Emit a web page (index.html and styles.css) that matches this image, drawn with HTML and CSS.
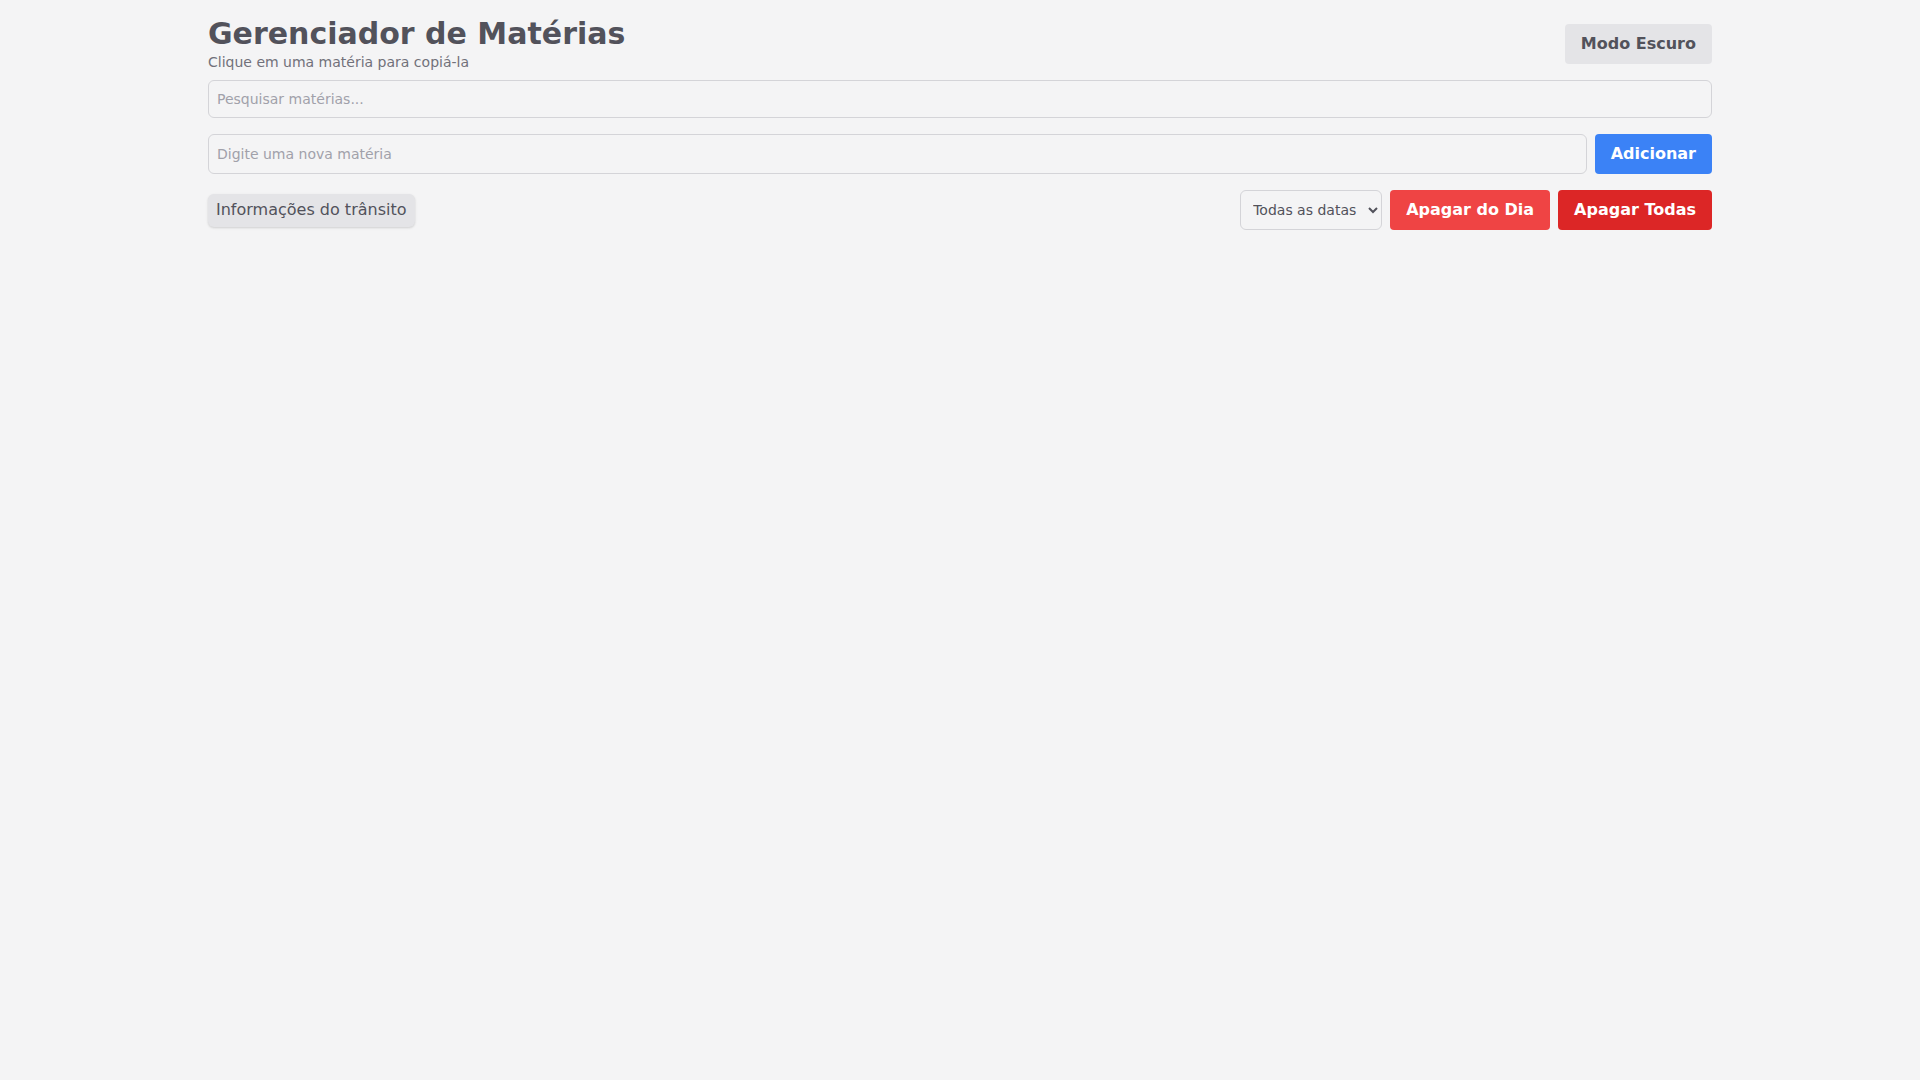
FILE: index.html
```html
<!DOCTYPE html>
<html lang="pt-BR">
<head>
<meta charset="utf-8">
<title>Gerenciador de Matérias</title>
<link rel="stylesheet" href="styles.css">
</head>
<body>
<div class="container">
  <header class="header">
    <div class="heading">
      <h1 class="title">Gerenciador de Matérias</h1>
      <p class="subtitle">Clique em uma matéria para copiá-la</p>
    </div>
    <button class="btn btn-gray">Modo Escuro</button>
  </header>

  <input class="field search" type="text" placeholder="Pesquisar matérias...">

  <div class="add-row">
    <input class="field add-input" type="text" placeholder="Digite uma nova matéria">
    <button class="btn btn-blue">Adicionar</button>
  </div>

  <div class="tools-row">
    <button class="traffic">Informações do trânsito</button>
    <div class="actions">
      <select class="date-select">
        <option>Todas as datas</option>
      </select>
      <button class="btn btn-red">Apagar do Dia</button>
      <button class="btn btn-darkred">Apagar Todas</button>
    </div>
  </div>
</div>
</body>
</html>
```

FILE: styles.css
```css
* { box-sizing: border-box; }
html, body { margin: 0; padding: 0; }
body {
  background: #f4f4f5;
  font-family: "DejaVu Sans", sans-serif;
  color: #52525b;
  min-height: 100vh;
}
.container {
  max-width: 1536px;
  margin: 0 auto;
  padding: 16px;
}
.header {
  display: flex;
  justify-content: space-between;
  align-items: center;
  margin-bottom: 8px;
}
.title {
  margin: 0;
  font-size: 30px;
  line-height: 36px;
  font-weight: bold;
  color: #52525b;
}
.subtitle {
  margin: 0;
  font-size: 14px;
  line-height: 20px;
  color: #71717a;
}
.btn {
  font-family: inherit;
  font-size: 16px;
  line-height: 24px;
  font-weight: bold;
  padding: 8px 16px;
  border: 0;
  border-radius: 4px;
  cursor: pointer;
}
.btn-gray { background: #e4e4e7; color: #52525b; }
.btn-blue { background: #3b82f6; color: #fff; }
.btn-red { background: #ef4444; color: #fff; }
.btn-darkred { background: #dc2626; color: #fff; }
.field {
  font-family: inherit;
  font-size: 14px;
  line-height: 20px;
  padding: 8px;
  border: 1px solid #d4d4d8;
  border-radius: 6px;
  background: transparent;
  color: #52525b;
  outline: none;
}
.field::placeholder { color: #a1a1aa; }
.search {
  display: block;
  width: 100%;
  margin-bottom: 16px;
}
.add-row {
  display: flex;
  gap: 8px;
  margin-bottom: 16px;
}
.add-input { flex: 1; }
.tools-row {
  display: flex;
  justify-content: space-between;
  align-items: center;
}
.traffic {
  font-family: inherit;
  font-size: 16px;
  line-height: 24px;
  padding: 4px 8px 5px;
  border: 0;
  border-radius: 6px;
  background: #e4e4e7;
  color: #52525b;
  box-shadow: 0 1px 3px rgba(0,0,0,0.1), 0 1px 2px rgba(0,0,0,0.06);
}
.actions {
  display: flex;
  gap: 8px;
}
.date-select {
  font-family: inherit;
  font-size: 14px;
  line-height: 20px;
  padding: 8px;
  border: 1px solid #d4d4d8;
  border-radius: 6px;
  background: #f4f4f5;
  color: #52525b;
  width: 142px;
}
```
